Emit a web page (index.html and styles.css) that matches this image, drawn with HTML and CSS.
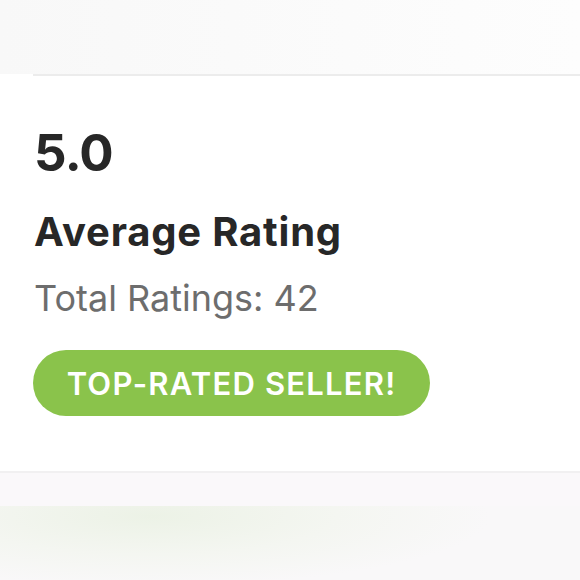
FILE: index.html
```html
<!DOCTYPE html>
<html>
<head>
<meta charset="utf-8">
<link rel="stylesheet" href="styles.css">
</head>
<body>
<div class="page">
  <div class="header"></div>
  <div class="card">
    <div class="card-inner">
      <div class="score">5.0</div>
      <div class="label">Average Rating</div>
      <div class="total">Total Ratings: 42</div>
      <div class="badge">TOP-RATED SELLER!</div>
    </div>
  </div>
  <div class="band"></div>
  <div class="footer"></div>
</div>
</body>
</html>
```
FILE: styles.css
```css
html, body {
  margin: 0;
  padding: 0;
  background: #ffffff;
}
.page {
  width: 580px;
  height: 580px;
  overflow: hidden;
  display: flex;
  flex-direction: column;
  font-family: Inter, "Noto Sans", sans-serif;
}
.header {
  height: 74px;
  background: linear-gradient(90deg, #f8f8f8 0%, #fafafa 40%, #fdfdfd 100%);
}
.card {
  background: #ffffff;
  border-bottom: 2px solid #f1f0f1;
}
.card-inner {
  margin-left: 33px;
  border-top: 2px solid #ececec;
  padding: 46px 0 55px 1px;
  display: flex;
  flex-direction: column;
  align-items: flex-start;
}
.score {
  font-size: 51px;
  font-weight: 700;
  color: #272727;
  line-height: 62px;
  letter-spacing: -0.8px;
}
.label {
  margin-top: 24px;
  font-size: 40px;
  font-weight: 700;
  color: #272727;
  line-height: 48px;
  letter-spacing: 0.8px;
}
.total {
  margin-top: 20px;
  font-size: 36px;
  font-weight: 400;
  color: #6d6d6d;
  line-height: 44px;
}
.badge {
  margin-top: 30px;
  margin-left: -1px;
  box-sizing: border-box;
  width: 397px;
  height: 66px;
  border-radius: 33px;
  background: #8ac34b;
  color: #ffffff;
  font-size: 31px;
  font-weight: 600;
  letter-spacing: 1.2px;
  display: flex;
  align-items: center;
  justify-content: center;
}
.band {
  height: 33px;
  background: #faf8fa;
}
.footer {
  flex: 1;
  background: radial-gradient(ellipse 340px 70px at 150px 10px, #ecf2e6 0%, #f4f6f1 55%, #f9f8f9 100%);
}
```
